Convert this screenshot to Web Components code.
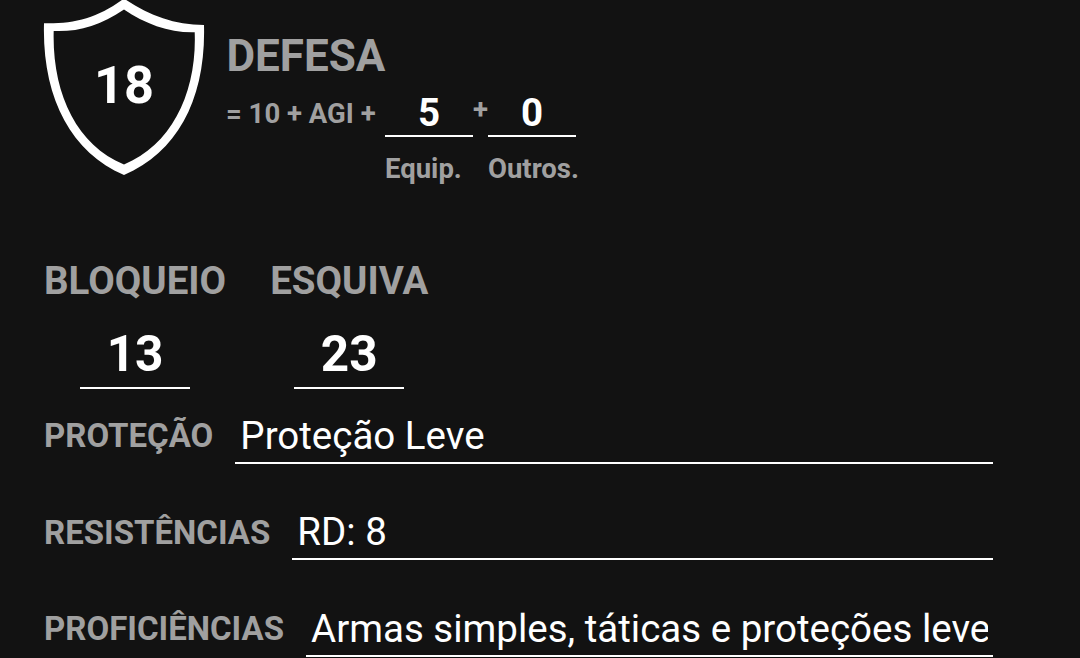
<!DOCTYPE html>
<html lang="pt-BR">
<head>
<meta charset="utf-8">
<title>Defesa</title>
<style>
    body {
        margin: 0;
        background-color: #121212;
        font-family: Roboto, sans-serif;
        overflow: hidden;
    }
</style>
</head>
<body>
<defense-sheet></defense-sheet>

<script>
class ShieldBadge extends HTMLElement {
    constructor() {
        super();
        this.attachShadow({ mode: 'open' });
        this.shadowRoot.innerHTML = `
            <style>
                :host {
                    display: grid;
                    width: 160px;
                    height: 175px;
                    flex: none;
                }
                svg, .number {
                    grid-area: 1 / 1;
                }
                svg {
                    overflow: visible;
                }
                .number {
                    color: #FFFFFF;
                    font-size: 52.25px;
                    font-weight: 700;
                    line-height: 60px;
                    text-align: center;
                    padding-top: 56px;
                }
            </style>
            <svg width="160" height="175" viewBox="0 0 160 175">
                <path fill="#FFFFFF" fill-rule="evenodd" d="M80 -1.5C104 15 130 25 160 25C162 98 134 152 80 175C26 152 -2 96 0 23.3C30 24 54 18 80 -1.5ZM80 9.5C56 26 34 32 9.7 31C8 92 32 145 80 164.5C128 145 153 92 150.7 32.3C126 33 101 24 80 9.5Z"/>
            </svg>
            <div class="number"><slot></slot></div>
        `;
    }
}

customElements.define('shield-badge', ShieldBadge);

class NumberField extends HTMLElement {
    constructor() {
        super();
        this.attachShadow({ mode: 'open' });
        this.shadowRoot.innerHTML = `
            <style>
                :host {
                    display: block;
                    width: 88px;
                    box-sizing: border-box;
                    border-bottom: 2px solid #FFFFFF;
                    color: #FFFFFF;
                    font-size: 38.5px;
                    font-weight: 700;
                    line-height: 45px;
                    text-align: center;
                }
                :host([large]) {
                    width: 110px;
                    font-size: 49.5px;
                    line-height: 56px;
                    padding-bottom: 5px;
                }
            </style>
            <slot></slot>
        `;
    }
}

customElements.define('number-field', NumberField);

class StatBox extends HTMLElement {
    constructor() {
        super();
        this.attachShadow({ mode: 'open' });
        this.shadowRoot.innerHTML = `
            <style>
                :host {
                    display: flex;
                    flex-direction: column;
                    align-items: center;
                    gap: 22px;
                }
                .title {
                    color: #A0A0A0;
                    font-size: 38.5px;
                    font-weight: 700;
                    line-height: 46px;
                }
            </style>
            <div class="title"><slot name="title"></slot></div>
            <number-field large><slot></slot></number-field>
        `;
    }
}

customElements.define('stat-box', StatBox);

class TextRow extends HTMLElement {
    constructor() {
        super();
        this.attachShadow({ mode: 'open' });
        this.shadowRoot.innerHTML = `
            <style>
                :host {
                    display: flex;
                    gap: 22px;
                    line-height: 50px;
                    white-space: nowrap;
                }
                .label {
                    padding-top: 0.3px;
                    color: #A0A0A0;
                    font-size: 33px;
                    font-weight: 700;
                }
                .value {
                    flex: 1;
                    min-width: 0;
                    padding: 0 5px 1px;
                    border-bottom: 2px solid #FFFFFF;
                    color: #FFFFFF;
                    font-size: 38.5px;
                }
                .text {
                    overflow: hidden;
                }
            </style>
            <div class="label"><slot name="label"></slot></div>
            <div class="value"><div class="text"><slot></slot></div></div>
        `;
    }
}

customElements.define('text-row', TextRow);

class DefenseSheet extends HTMLElement {
    constructor() {
        super();
        this.attachShadow({ mode: 'open' });
        this.shadowRoot.innerHTML = `
            <style>
                :host {
                    display: block;
                    height: 658px;
                    overflow: hidden;
                    box-sizing: border-box;
                    padding: 0 87px 0 44px;
                    color: #A0A0A0;
                }
                .defense {
                    display: flex;
                    gap: 22px;
                    height: 258px;
                }
                .info {
                    padding-top: 30px;
                }
                h1 {
                    margin: 0 0 8px;
                    padding-left: 0.5px;
                    font-size: 44px;
                    font-weight: 700;
                    line-height: 52px;
                }
                .formula {
                    display: grid;
                    grid-template-columns: 159px 88px 15px 88px;
                    row-gap: 16px;
                    font-size: 27.5px;
                    font-weight: 700;
                    line-height: 32px;
                    white-space: nowrap;
                }
                .base {
                    padding-top: 8px;
                }
                .plus {
                    padding-top: 4px;
                }
                .equip {
                    grid-column: 2;
                }
                .others {
                    grid-column: 4;
                }
                .stats {
                    display: flex;
                    gap: 44px;
                    margin-bottom: 22px;
                }
                .rows {
                    display: grid;
                    grid-template-columns: minmax(0, 1fr);
                    row-gap: 43.4px;
                }
            </style>
            <div class="defense">
                <shield-badge>18</shield-badge>
                <div class="info">
                    <h1>DEFESA</h1>
                    <div class="formula">
                        <span class="base">= 10 + AGI +</span>
                        <number-field>5</number-field>
                        <span class="plus">+</span>
                        <number-field>0</number-field>
                        <span class="equip">Equip.</span>
                        <span class="others">Outros.</span>
                    </div>
                </div>
            </div>
            <div class="stats">
                <stat-box><span slot="title">BLOQUEIO</span>13</stat-box>
                <stat-box><span slot="title">ESQUIVA</span>23</stat-box>
            </div>
            <div class="rows">
                <text-row><span slot="label">PROTEÇÃO</span>Proteção Leve</text-row>
                <text-row><span slot="label">RESISTÊNCIAS</span>RD: 8</text-row>
                <text-row><span slot="label">PROFICIÊNCIAS</span>Armas simples, táticas e proteções leves</text-row>
            </div>
        `;
    }
}

customElements.define('defense-sheet', DefenseSheet);
</script>
</body>
</html>
